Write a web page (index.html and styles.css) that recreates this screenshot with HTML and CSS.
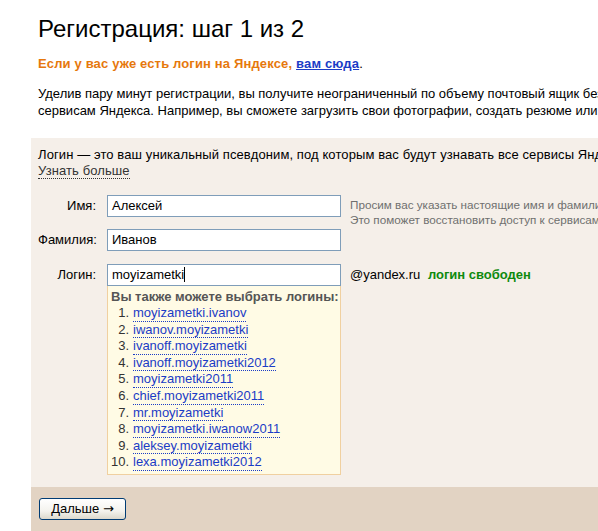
FILE: index.html
```html
<!DOCTYPE html>
<html lang="ru">
<head>
<meta charset="utf-8">
<title>Регистрация</title>
<link rel="stylesheet" href="styles.css">
</head>
<body>
<div class="page">
  <h1 class="title">Регистрация: шаг 1 из 2</h1>
  <p class="already">Если у вас уже есть логин на Яндексе, <a href="#" class="already-link">вам сюда</a><span class="dot">.</span></p>
  <p class="intro">Уделив пару минут регистрации, вы получите неограниченный по объему почтовый ящик без ограничений и доступ ко всем<br>сервисам Яндекса. Например, вы сможете загрузить свои фотографии, создать резюме или вести блог.</p>

  <div class="panel">
    <div class="panel-body">
      <p class="panel-note">Логин — это ваш уникальный псевдоним, под которым вас будут узнавать все сервисы Яндекса.<br><a href="#" class="more">Узнать больше</a></p>

      <div class="row row-first">
        <label class="label">Имя:</label>
        <div class="field"><div class="input">Алексей</div></div>
        <div class="hint">Просим вас указать настоящие имя и фамилию.<br>Это поможет восстановить доступ к сервисам.</div>
      </div>

      <div class="row">
        <label class="label">Фамилия:</label>
        <div class="field"><div class="input">Иванов</div></div>
      </div>

      <div class="row row-login">
        <label class="label">Логин:</label>
        <div class="field">
          <div class="input">moyizametki<span class="caret"></span></div>
          <div class="suggest">
            <div class="suggest-title">Вы также можете выбрать логины:</div>
            <ol class="suggest-list">
              <li><span class="num">1.</span><a href="#">moyizametki.ivanov</a></li>
              <li><span class="num">2.</span><a href="#">iwanov.moyizametki</a></li>
              <li><span class="num">3.</span><a href="#">ivanoff.moyizametki</a></li>
              <li><span class="num">4.</span><a href="#">ivanoff.moyizametki2012</a></li>
              <li><span class="num">5.</span><a href="#">moyizametki2011</a></li>
              <li><span class="num">6.</span><a href="#">chief.moyizametki2011</a></li>
              <li><span class="num">7.</span><a href="#">mr.moyizametki</a></li>
              <li><span class="num">8.</span><a href="#">moyizametki.iwanow2011</a></li>
              <li><span class="num">9.</span><a href="#">aleksey.moyizametki</a></li>
              <li><span class="num">10.</span><a href="#">lexa.moyizametki2012</a></li>
            </ol>
          </div>
        </div>
        <div class="domain">@yandex.ru <b class="free">логин свободен</b></div>
      </div>
    </div>
    <div class="panel-foot">
      <button class="btn" type="button">Дальше <span class="arrow">→</span></button>
    </div>
  </div>
</div>
</body>
</html>
```

FILE: styles.css
```css
html, body {
  margin: 0;
  padding: 0;
  background: #fff;
}
body {
  font-family: "Liberation Sans", Arial, sans-serif;
  font-size: 13px;
  color: #000;
  overflow: hidden;
}
.page {
  width: 1000px;
  padding-left: 31px;
}
.title {
  margin: 0;
  padding: 13px 0 0 7px;
  font-size: 24px;
  font-weight: normal;
  line-height: 32px;
}
.already {
  margin: 11px 0 0 7px;
  font-weight: bold;
  color: #e6780c;
  line-height: 16px;
  letter-spacing: 0.15px;
  white-space: nowrap;
}
.already-link {
  color: #1b3cc6;
}
.dot {
  color: #000;
  font-weight: normal;
}
.intro {
  margin: 13px 0 0 7px;
  line-height: 17px;
  white-space: nowrap;
}
.panel {
  margin-top: 19px;
  background: #f5efe9;
}
.panel-body {
  padding: 9px 0 12px 7px;
}
.panel-note {
  margin: 0;
  line-height: 16px;
  letter-spacing: 0.1px;
  white-space: nowrap;
}
.more {
  color: #333;
  text-decoration: none;
  border-bottom: 1px dotted #333;
}
.row {
  display: flex;
  align-items: flex-start;
  margin-top: 12px;
}
.row-first {
  margin-top: 16px;
}
.row-login {
  margin-top: 13px;
}
.label {
  width: 58px;
  text-align: right;
  padding-top: 4px;
  line-height: 14px;
  margin-right: 11px;
}
.field {
  width: 234px;
}
.input {
  box-sizing: border-box;
  height: 22px;
  border: 1px solid #7f9db9;
  background: #fff;
  font-size: 13px;
  line-height: 20px;
  padding: 0 4px;
}
.caret {
  display: inline-block;
  width: 1px;
  height: 15px;
  background: #000;
  vertical-align: -3px;
}
.hint {
  margin-left: 9px;
  margin-bottom: -14px;
  padding-top: 2px;
  font-size: 11.7px;
  line-height: 15px;
  color: #6f6f6f;
  white-space: nowrap;
}
.domain {
  margin-left: 9px;
  padding-top: 3px;
  line-height: 16px;
  white-space: nowrap;
}
.free {
  margin-left: 4px;
  color: #0e8a0e;
}
.suggest {
  box-sizing: border-box;
  width: 234px;
  background: #fffbe5;
  border: 1px solid #f0d0a0;
  border-top: 0;
  padding: 2px 0 3px 3px;
}
.suggest-title {
  font-weight: bold;
  color: #555;
  line-height: 17px;
}
.suggest-list {
  list-style: none;
  margin: 0;
  padding: 0;
}
.suggest-list li {
  display: flex;
  line-height: 16.6px;
}
.num {
  width: 18px;
  text-align: right;
  margin-right: 4px;
  color: #333;
}
.suggest-list a {
  color: #1b3cc6;
  text-decoration: none;
  border-bottom: 1px dotted #1b3cc6;
  line-height: 15px;
}
.panel-foot {
  background: #e2d3c3;
  padding: 11px 0 14px 8px;
}
.btn {
  box-sizing: border-box;
  width: 87px;
  height: 22px;
  border: 1px solid #003c74;
  border-radius: 3px;
  background: linear-gradient(#ffffff, #f4f3ee 60%, #dcd8cc);
  font-family: "Liberation Sans", Arial, sans-serif;
  font-size: 13px;
  color: #000;
  padding: 0;
}
.arrow {
  font-family: "DejaVu Sans", sans-serif;
  font-size: 13px;
}
```
